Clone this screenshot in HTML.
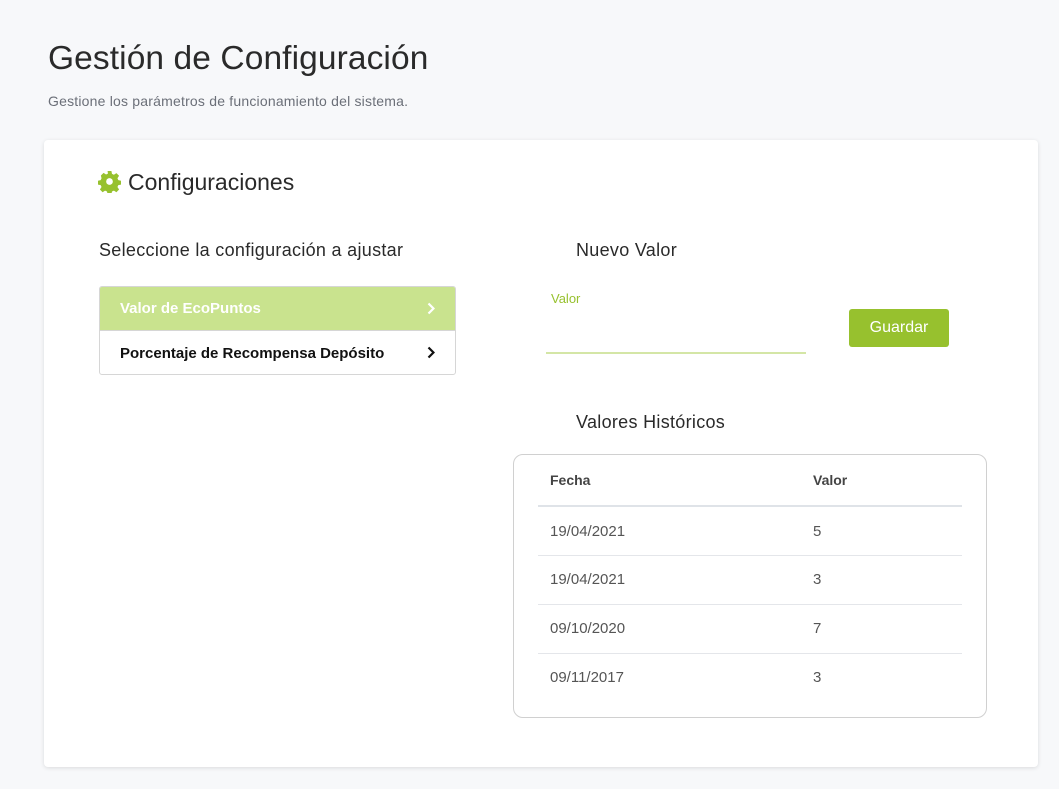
<!DOCTYPE html>
<html><head><meta charset="utf-8"><style>
*{box-sizing:border-box;margin:0;padding:0}
body{width:1059px;height:789px;background:#f7f8fa;font-family:"Liberation Sans",sans-serif;position:relative;overflow:hidden;color:#222}
.a{position:absolute;white-space:nowrap}
.card{position:absolute;left:44px;top:140px;width:994px;height:627px;background:#fff;border-radius:4px;box-shadow:0 1px 4px rgba(0,0,0,.12)}
.list{position:absolute;left:99px;top:286px;width:357px;height:89px;border:1px solid #d6d6d6;border-radius:3px;overflow:hidden}
.item{height:44px;display:flex;align-items:center;padding-left:20px;font-size:15px;font-weight:bold;position:relative}
.tbl{position:absolute;left:513px;top:454px;width:474px;height:264px;border:1px solid #d0d0d0;border-radius:10px}
.row{position:absolute;left:24px;width:424px;height:49px;border-top:1px solid #e4e6ea;font-size:15px;color:#555}
</style></head><body>
<div class="a" style="left:48px;top:40px;font-size:33.5px;color:#2a2a2a;letter-spacing:.1px">Gestión de Configuración</div>
<div class="a" style="left:48px;top:93px;font-size:14px;color:#6b6f78;letter-spacing:.2px">Gestione los parámetros de funcionamiento del sistema.</div>
<div class="card"></div>
<svg class="a" style="left:98px;top:170px" width="23" height="23" viewBox="0 0 24 24"><path fill="#97c12e" d="M10 1h4l.6 3 2 .9 2.6-1.7 2.8 2.8-1.7 2.6.9 2 3 .6v4l-3 .6-.9 2 1.7 2.6-2.8 2.8-2.6-1.7-2 .9-.6 3h-4l-.6-3-2-.9-2.6 1.7-2.8-2.8 1.7-2.6-.9-2-3-.6v-4l3-.6.9-2L3 5.8 5.8 3l2.6 1.7 2-.9z"/><circle cx="12" cy="12" r="3.5" fill="#fff"/></svg>
<div class="a" style="left:128px;top:169px;font-size:23px;color:#2a2a2a">Configuraciones</div>
<div class="a" style="left:99px;top:240px;font-size:18px;color:#2a2a2a;letter-spacing:.3px">Seleccione la configuración a ajustar</div>
<div class="list">
<div class="item" style="background:#c9e38e;color:#fff;border-bottom:1px solid #d6d6d6">Valor de EcoPuntos<svg class="a" style="right:20px;top:15px" width="8" height="13" viewBox="0 0 8 13"><path d="M1.5 1.5l5 5-5 5" fill="none" stroke="#fff" stroke-width="2.2"/></svg></div>
<div class="item" style="color:#111">Porcentaje de Recompensa Depósito<svg class="a" style="right:20px;top:15px" width="8" height="13" viewBox="0 0 8 13"><path d="M1.5 1.5l5 5-5 5" fill="none" stroke="#111" stroke-width="2.2"/></svg></div>
</div>
<div class="a" style="left:576px;top:240px;font-size:18px;color:#2a2a2a;letter-spacing:.3px">Nuevo Valor</div>
<div class="a" style="left:551px;top:291px;font-size:13px;color:#97c12e">Valor</div>
<div class="a" style="left:546px;top:352px;width:260px;height:2px;background:#d4e6a6"></div>
<div class="a" style="left:849px;top:309px;width:100px;height:38px;background:#97c12e;border-radius:3px;color:#fff;font-size:16px;text-align:center;line-height:38px">Guardar</div>
<div class="a" style="left:576px;top:412px;font-size:18px;color:#2a2a2a;letter-spacing:.3px">Valores Históricos</div>
<div class="tbl">
<div class="a" style="left:36px;top:17px;font-size:14px;font-weight:bold;color:#444">Fecha</div>
<div class="a" style="left:299px;top:17px;font-size:14px;font-weight:bold;color:#444">Valor</div>
<div class="row" style="top:50px;border-top:2px solid #dfe3e8"><span class="a" style="left:12px;top:16px">19/04/2021</span><span class="a" style="left:275px;top:16px">5</span></div>
<div class="row" style="top:100px"><span class="a" style="left:12px;top:15px">19/04/2021</span><span class="a" style="left:275px;top:15px">3</span></div>
<div class="row" style="top:149px"><span class="a" style="left:12px;top:15px">09/10/2020</span><span class="a" style="left:275px;top:15px">7</span></div>
<div class="row" style="top:198px"><span class="a" style="left:12px;top:15px">09/11/2017</span><span class="a" style="left:275px;top:15px">3</span></div>
</div>
</body></html>
